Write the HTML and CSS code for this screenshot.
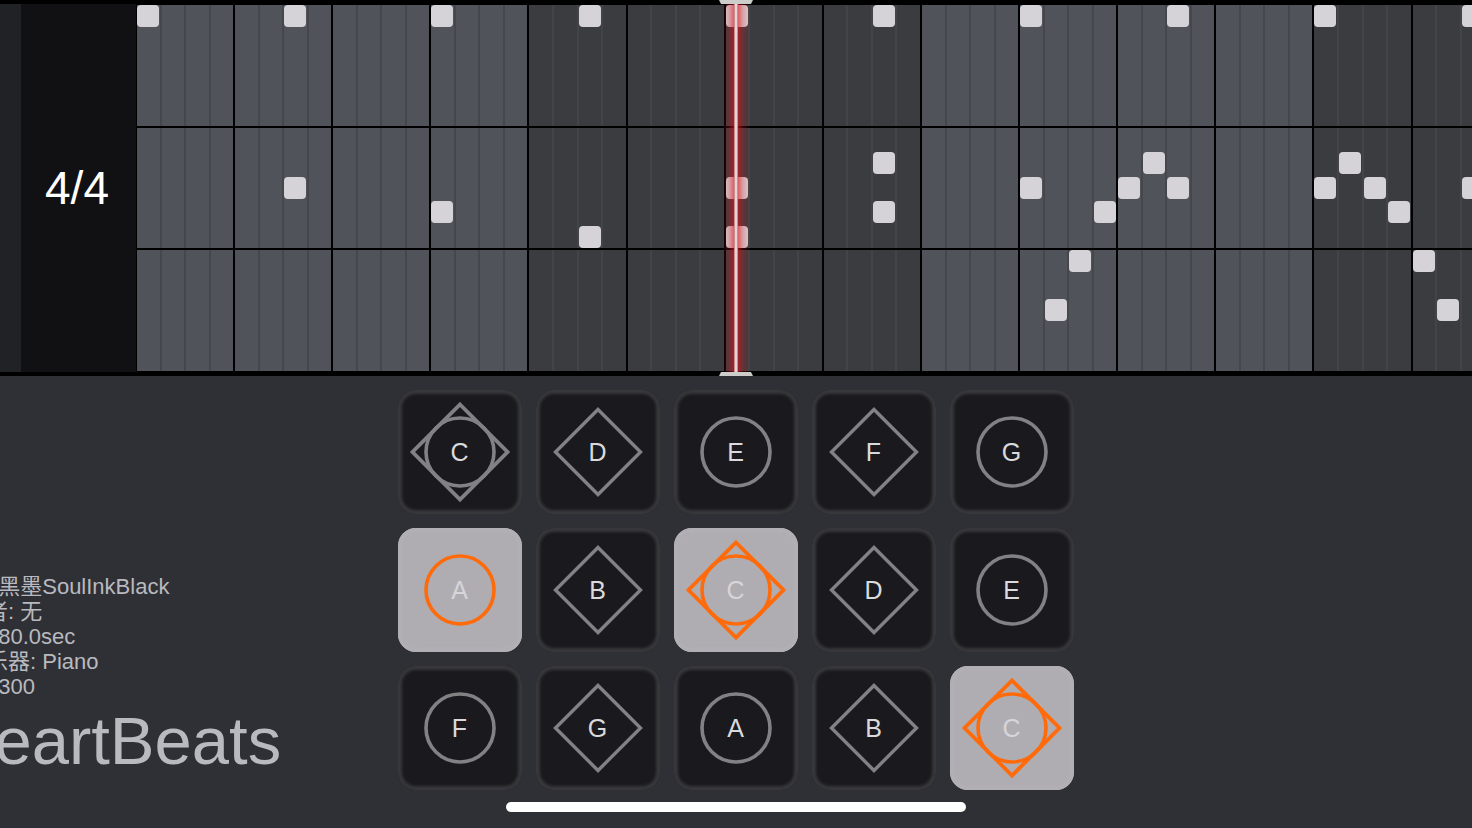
FILE: index.html
```html
<!DOCTYPE html>
<html lang="zh">
<head>
    <meta charset="UTF-8">
    <meta name="viewport" content="width=device-width, initial-scale=1.0">
    <title>HeartBeats</title>
    <link rel="stylesheet" href="styles.css">
</head>
<body>

    <svg class="shapes" aria-hidden="true">
        <symbol id="circle" viewBox="0 0 124 124">
            <circle cx="62" cy="62" r="34" stroke-width="3.6"/>
        </symbol>
        <symbol id="diamond" viewBox="0 0 124 124">
            <path d="M62 19.5 104.5 62 62 104.5 19.5 62Z" stroke-width="3.4"/>
        </symbol>
        <symbol id="both" viewBox="0 0 124 124">
            <circle cx="62" cy="62" r="34" stroke-width="3.6"/>
            <path d="M62 14.5 109.5 62 62 109.5 14.5 62Z" stroke-width="3.8"/>
        </symbol>
    </svg>

    <header class="score">
        <div class="edge"></div>
        <div class="meter">4/4</div>
        <div class="track">
            <div class="roll"></div>
        </div>
        <div class="playhead"></div>
    </header>

    <main class="stage">
        <section class="info">
            <ul>
                <li>: 黑墨SoulInkBlack</li>
                <li>者: 无</li>
                <li>180.0sec</li>
                <li>乐器: Piano</li>
                <li>1300</li>
            </ul>
            <h1>HeartBeats</h1>
        </section>

        <section class="pads">
            <button class="pad"><svg><use href="#both"/></svg><span>C</span></button>
            <button class="pad"><svg><use href="#diamond"/></svg><span>D</span></button>
            <button class="pad"><svg><use href="#circle"/></svg><span>E</span></button>
            <button class="pad"><svg><use href="#diamond"/></svg><span>F</span></button>
            <button class="pad"><svg><use href="#circle"/></svg><span>G</span></button>

            <button class="pad lit"><svg><use href="#circle"/></svg><span>A</span></button>
            <button class="pad"><svg><use href="#diamond"/></svg><span>B</span></button>
            <button class="pad lit"><svg><use href="#both"/></svg><span>C</span></button>
            <button class="pad"><svg><use href="#diamond"/></svg><span>D</span></button>
            <button class="pad"><svg><use href="#circle"/></svg><span>E</span></button>

            <button class="pad"><svg><use href="#circle"/></svg><span>F</span></button>
            <button class="pad"><svg><use href="#diamond"/></svg><span>G</span></button>
            <button class="pad"><svg><use href="#circle"/></svg><span>A</span></button>
            <button class="pad"><svg><use href="#diamond"/></svg><span>B</span></button>
            <button class="pad lit"><svg><use href="#both"/></svg><span>C</span></button>
        </section>
    </main>

    <div class="home"></div>

    <script>
        const roll = document.querySelector('.roll');

        const beats = 14;

        // [step, row]
        const notes = [
            [0, 0], [6, 0], [12, 0], [18, 0], [24, 0], [30, 0], [36, 0], [42, 0], [48, 0], [54, 0],
            [6, 7], [12, 8], [18, 9], [24, 7], [24, 9], [30, 6], [30, 8],
            [36, 7], [37, 12], [38, 10], [39, 8], [40, 7], [41, 6], [42, 7],
            [48, 7], [49, 6], [50, 7], [51, 8], [52, 10], [53, 12], [54, 7]
        ];

        for (let row = 0; row < 3; row++) {
            for (let beat = 0; beat < beats; beat++) {
                const odd = Math.floor(beat / 4) % 2;
                add(odd ? 'beat dark' : 'beat', `${row * 5 + 1} / ${beat * 4 + 1} / span 5 / span 4`);
            }
        }

        notes.forEach(([step, row]) => add('note', `${row + 1} / ${step + 1}`));

        function add(name, area) {
            const item = document.createElement('div');

            item.className = name;
            item.style.gridArea = area;
            roll.append(item);
        }
    </script>
</body>
</html>
```
FILE: styles.css
```css
* {
    margin: 0;
    padding: 0;
    box-sizing: border-box;
    font-family: "Liberation Sans", "Noto Sans CJK SC", sans-serif;
}

body {
    background-color: #2f3035;
    overflow-x: hidden;
}

.shapes {
    display: none;
}

.score {
    position: relative;
    display: flex;
    height: 376px;
    border-top: 4px solid #000;
    border-bottom: 4px solid #000;
}

.edge {
    width: 21px;
    background-color: #212225;
}

.meter {
    width: 115px;
    display: flex;
    align-items: center;
    justify-content: center;
    padding-right: 3px;
    background-color: #111113;
    color: #fff;
    font-size: 46px;
}

.track {
    flex: 1;
    min-width: 0;
    overflow: hidden;
    border-top: 1px solid #000;
    border-left: 1px solid #000;
}

.roll {
    display: grid;
    grid-template-columns: repeat(56, minmax(0, 1fr));
    grid-template-rows: repeat(15, minmax(0, 1fr));
    width: 102.9%;
    height: 368px;
}

.beat {
    --step: #45474b;
    background-color: #50535a;
    background-image:
        linear-gradient(var(--step), var(--step)),
        linear-gradient(var(--step), var(--step)),
        linear-gradient(var(--step), var(--step));
    background-size: 2px 100%;
    background-position: 24% 0, 50% 0, 76% 0;
    background-repeat: no-repeat;
    border-right: 2px solid #000;
    border-bottom: 2px solid #000;
}

.beat.dark {
    --step: #434447;
    background-color: #3b3c40;
}

.note {
    width: 22px;
    height: 22px;
    border-radius: 4px;
    background-color: #d5d3d8;
}

.playhead {
    position: absolute;
    top: -4px;
    bottom: -4px;
    left: 50%;
    width: 34px;
    transform: translateX(-50%);
    background:
        linear-gradient(90deg, #c98d92 1px, #e8d3d7 1px, #e8d3d7 3px, #c98d92 3px) center / 4px calc(100% - 8px) no-repeat,
        linear-gradient(90deg, rgba(225, 20, 25, 0), rgba(225, 20, 25, .25) 25%, rgba(225, 20, 25, .65) 45%, rgba(225, 20, 25, .65) 55%, rgba(225, 20, 25, .25) 75%, rgba(225, 20, 25, 0)) center / 28px calc(100% - 8px) no-repeat;
}

.playhead::before,
.playhead::after {
    content: "";
    position: absolute;
    left: 0;
    width: 100%;
    height: 4px;
    background-color: #cdcdcc;
}

.playhead::before {
    top: 0;
    clip-path: polygon(0 0, 100% 0, 94% 100%, 6% 100%);
}

.playhead::after {
    bottom: 0;
    clip-path: polygon(6% 0, 94% 0, 100% 100%, 0 100%);
}

.stage {
    display: grid;
    grid-template-columns: 1fr auto 1fr;
    padding-top: 14px;
}

.info {
    align-self: end;
    min-width: 0;
    padding-bottom: 15px;
    color: #b9babf;
    white-space: nowrap;
}

.info ul {
    list-style: none;
    margin-left: -14px;
    font-size: 22px;
    line-height: 25px;
}

.info h1 {
    margin-top: 8px;
    margin-left: -54px;
    font-size: 67px;
    font-weight: normal;
    line-height: 68px;
}

.pads {
    display: grid;
    grid-template-columns: repeat(5, 124px);
    grid-auto-rows: 124px;
    gap: 14px;
}

.pad {
    display: grid;
    place-items: center;
    border: none;
    border-radius: 18px;
    background-color: #1a1a1e;
    box-shadow: inset 0 0 3px 4px #38383c;
    color: #dadadc;
    font-size: 25px;
}

.pad svg,
.pad span {
    grid-area: 1 / 1;
}

.pad span {
    padding-right: 1px;
}

.pad svg {
    width: 124px;
    height: 124px;
    fill: none;
    stroke: #828284;
}

.pad.lit {
    background-color: #afadb2;
    box-shadow: inset 0 0 3px 4px #b2b0b5;
    color: #d6d5d9;
}

.pad.lit svg {
    stroke: #ff6a0a;
}

.home {
    width: 460px;
    height: 10px;
    margin: 12px auto 16px;
    border-radius: 5px;
    background-color: #fff;
}
```
